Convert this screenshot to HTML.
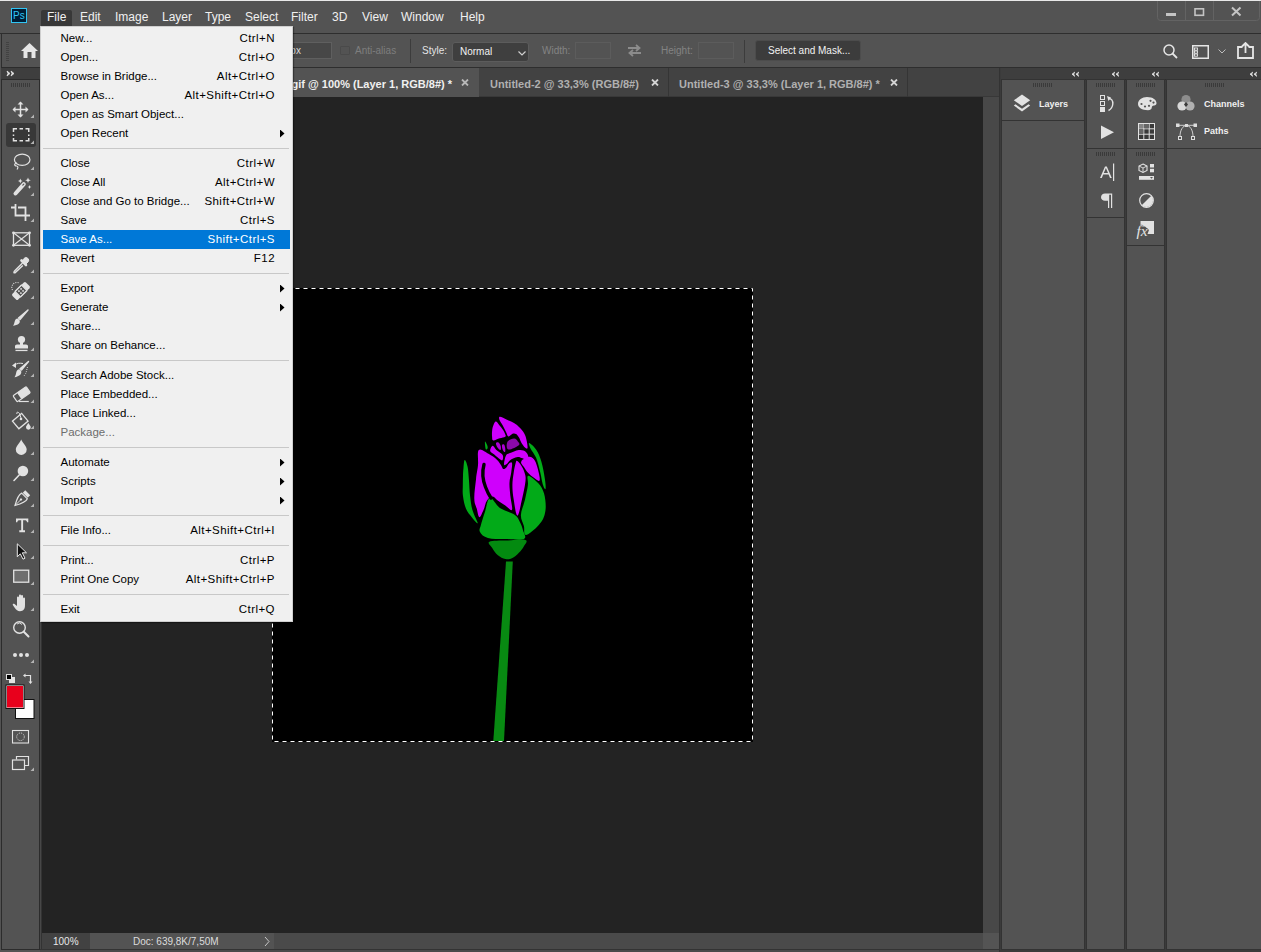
<!DOCTYPE html>
<html><head><meta charset="utf-8">
<style>
*{margin:0;padding:0;box-sizing:border-box}
html,body{width:1261px;height:952px;overflow:hidden;background:#535353;font-family:"Liberation Sans",sans-serif}
.a{position:absolute}
.t{position:absolute;white-space:nowrap;line-height:1}
/* menu bar */
#topstrip{left:0;top:0;width:1261px;height:1px;background:#e8e8e8}
#menubar{left:0;top:1px;width:1261px;height:32px;background:#535353}
.mb{position:absolute;top:10px;font-size:12px;color:#f0f0f0;white-space:nowrap;line-height:12px}
#opts{left:0;top:33px;width:1261px;height:34px;background:#535353;border-top:1px solid #2e2e2e}
#tabbar{left:42px;top:67px;width:957px;height:30px;background:#424242;border-top:1px solid #2e2e2e}
#canvas{left:42px;top:97px;width:941px;height:836px;background:#232323}
#vscroll{left:983px;top:97px;width:16px;height:836px;background:#484848}
#status{left:42px;top:933px;width:941px;height:16px;background:#4a4a4a}
#doc{left:272px;top:288px;width:481px;height:454px;background:#000}
/* menu */
#menu{left:40px;top:26px;width:253px;height:596px;background:#f0f0f0;border:1px solid #cfcfcf;box-shadow:1px 1px 1px rgba(0,0,0,.35)}
.mi{position:absolute;left:2px;width:247px;height:19px}
.mi .l{position:absolute;left:17.5px;top:3px;font-size:11.5px;color:#000;white-space:nowrap;line-height:12px}
.mi .r{position:absolute;right:15px;top:3px;font-size:11.5px;letter-spacing:0.45px;color:#000;white-space:nowrap;line-height:12px}
.mi.h{background:#0078d7}
.mi.h .l,.mi.h .r{color:#fff}
.mi.d .l{color:#6d6d6d}
.sep{position:absolute;left:2px;width:246px;height:1px;background:#c8c8c8}
.arr{position:absolute;left:237px;top:5.5px;width:4.5px;height:8px;background:#000;clip-path:polygon(0 0,100% 50%,0 100%)}
</style></head><body>
<div id="topstrip" class="a"></div>
<div id="menubar" class="a">
  <div class="a" style="left:11px;top:7px;width:16px;height:15px;background:#001e36;border:1px solid #31c5f4"></div>
  <div class="t" style="left:13px;top:10px;font-size:10px;color:#31c5f4">Ps</div>
  <div class="a" style="left:41px;top:9px;width:31px;height:16px;background:#383838;border-radius:2px 2px 0 0"></div>
  <div class="mb" style="left:47px">File</div>
  <div class="mb" style="left:80px">Edit</div>
  <div class="mb" style="left:115px">Image</div>
  <div class="mb" style="left:162px">Layer</div>
  <div class="mb" style="left:205px">Type</div>
  <div class="mb" style="left:245px">Select</div>
  <div class="mb" style="left:291px">Filter</div>
  <div class="mb" style="left:332px">3D</div>
  <div class="mb" style="left:362px">View</div>
  <div class="mb" style="left:401px">Window</div>
  <div class="mb" style="left:460px">Help</div>
</div>
<svg class="a" style="left:1150px;top:0" width="111" height="25" viewBox="1150 0 111 25">
  <path d="M1157.5 1 V17.5 Q1157.5 20.5 1160.5 20.5 H1256.5 Q1259.5 20.5 1259.5 17.5 V1" fill="none" stroke="#636363" stroke-width="1"/>
  <path d="M1185.5 1 V20 M1213.5 1 V20" stroke="#636363" stroke-width="1"/>
  <rect x="1166" y="13" width="10" height="3" fill="#c4c4c4"/>
  <rect x="1195" y="8.8" width="8.5" height="6.5" fill="none" stroke="#c4c4c4" stroke-width="1.6"/>
  <path d="M1232 7.5 L1240.5 15.5 M1240.5 7.5 L1232 15.5" stroke="#c4c4c4" stroke-width="2"/>
</svg>
<div id="opts" class="a">
  <div class="a" style="left:1px;top:0;width:1px;height:34px;background:#2e2e2e"></div>
  <div class="a" style="left:6px;top:8px;width:3px;height:19px;background:repeating-linear-gradient(#424242 0 1px,transparent 1px 2px)"></div>
  <svg class="a" style="left:21px;top:9px" width="17" height="15" viewBox="0 0 17 15"><path d="M8.5 0 L17 8 L14.5 8 L14.5 15 L10.5 15 L10.5 9 L6.5 9 L6.5 15 L2.5 15 L2.5 8 L0 8 Z" fill="#e6e6e6"/></svg>
  <div class="a" style="left:270px;top:8px;width:62px;height:17px;background:#474747;border:1px solid #5f5f5f"></div>
  <div class="t" style="left:282px;top:12px;font-size:10px;color:#d8d8d8">0 px</div>
  <div class="a" style="left:340px;top:12px;width:10px;height:9px;border:1px solid #4a4a4a;border-radius:1px"></div>
  <div class="t" style="left:355px;top:12px;font-size:10px;color:#7e7e7e">Anti-alias</div>
  <div class="a" style="left:410px;top:5px;width:1px;height:24px;background:#3c3c3c"></div>
  <div class="t" style="left:422px;top:12px;font-size:10px;color:#e4e4e4">Style:</div>
  <div class="a" style="left:452px;top:8px;width:77px;height:20px;background:#3f3f3f;border:1px solid #5c5c5c;border-radius:3px"></div>
  <div class="t" style="left:460px;top:13px;font-size:10px;color:#f2f2f2">Normal</div>
  <svg class="a" style="left:518px;top:17px" width="8" height="5" viewBox="0 0 8 5"><path d="M0.5 0.5 L4 4 L7.5 0.5" stroke="#d0d0d0" stroke-width="1.2" fill="none"/></svg>
  <div class="t" style="left:542px;top:12px;font-size:10px;color:#838383">Width:</div>
  <div class="a" style="left:575px;top:8px;width:36px;height:17px;border:1px solid #5c5c5c"></div>
  <svg class="a" style="left:627px;top:10px" width="15" height="13" viewBox="0 0 15 13"><path d="M1 4 L12 4 M9 1 L12.5 4 L9 7 M14 9 L3 9 M6 6 L2.5 9 L6 12" stroke="#8c8c8c" stroke-width="1.8" fill="none"/></svg>
  <div class="t" style="left:661px;top:12px;font-size:10px;color:#838383">Height:</div>
  <div class="a" style="left:698px;top:8px;width:36px;height:17px;border:1px solid #5c5c5c"></div>
  <div class="a" style="left:744px;top:6px;width:1px;height:23px;background:#3c3c3c"></div>
  <div class="a" style="left:755px;top:6px;width:106px;height:21px;background:#3c3c3c;border:1px solid #4c4c4c;border-radius:3px"></div>
  <div class="t" style="left:768px;top:12px;font-size:10px;color:#f2f2f2">Select and Mask...</div>
  <svg class="a" style="left:1163px;top:10px" width="15" height="15" viewBox="0 0 15 15"><circle cx="6" cy="6" r="5" stroke="#e6e6e6" stroke-width="1.5" fill="none"/><path d="M9.5 9.5 L14 14" stroke="#e6e6e6" stroke-width="1.8"/></svg>
  <svg class="a" style="left:1192px;top:11px" width="17" height="14" viewBox="0 0 17 14"><rect x="0.75" y="0.75" width="15.5" height="12.5" stroke="#e6e6e6" stroke-width="1.5" fill="none"/><rect x="2.5" y="3" width="3" height="2.2" fill="none" stroke="#e6e6e6" stroke-width="0.9"/><rect x="2.5" y="6" width="3" height="2.2" fill="none" stroke="#e6e6e6" stroke-width="0.9"/><rect x="2.5" y="9" width="3" height="2.2" fill="none" stroke="#e6e6e6" stroke-width="0.9"/></svg>
  <svg class="a" style="left:1218px;top:15px" width="8" height="5" viewBox="0 0 8 5"><path d="M0.5 0.5 L4 4 L7.5 0.5" stroke="#bdbdbd" stroke-width="1" fill="none"/></svg>
  <svg class="a" style="left:1237px;top:8px" width="17" height="17" viewBox="0 0 17 17"><path d="M5.5 5 L1 5 L1 16 L16 16 L16 5 L11.5 5" stroke="#e6e6e6" stroke-width="1.8" fill="none"/><path d="M8.5 11 L8.5 2 M5 4.5 L8.5 1 L12 4.5" stroke="#e6e6e6" stroke-width="1.8" fill="none"/></svg>
</div>
<div id="tabbar" class="a">
  <div class="a" style="left:437px;top:28px;width:520px;height:1px;background:#383838"></div>
  <div class="a" style="left:0;top:0;width:437px;height:29px;background:#535353"></div>
  <div class="t" style="left:249.5px;top:11px;font-size:11px;font-weight:700;color:#f0f0f0">gif @ 100% (Layer 1, RGB/8#) *</div>
  <svg class="a" style="left:419px;top:11px" width="8" height="7" viewBox="0 0 8 7"><path d="M1 0.5 L7 6.5 M7 0.5 L1 6.5" stroke="#b8b8b8" stroke-width="1.8"/></svg>
  <div class="t" style="left:448px;top:11px;font-size:11px;font-weight:700;color:#b0b0b0">Untitled-2 @ 33,3% (RGB/8#)</div>
  <svg class="a" style="left:609px;top:11px" width="8" height="7" viewBox="0 0 8 7"><path d="M1 0.5 L7 6.5 M7 0.5 L1 6.5" stroke="#d4d4d4" stroke-width="1.8"/></svg>
  <div class="a" style="left:626px;top:0;width:1px;height:29px;background:#353535"></div>
  <div class="t" style="left:637px;top:11px;font-size:11px;font-weight:700;color:#b0b0b0">Untitled-3 @ 33,3% (Layer 1, RGB/8#) *</div>
  <svg class="a" style="left:848px;top:11px" width="8" height="7" viewBox="0 0 8 7"><path d="M1 0.5 L7 6.5 M7 0.5 L1 6.5" stroke="#d4d4d4" stroke-width="1.8"/></svg>
  <div class="a" style="left:865px;top:0;width:1px;height:29px;background:#353535"></div>
</div>
<div id="canvas" class="a"></div>
<div id="vscroll" class="a"></div>
<div class="a" style="left:983px;top:933px;width:16px;height:16px;background:#545454"></div>
<div class="a" style="left:0;top:949px;width:1261px;height:3px;background:#4a4a4a;border-top:1px solid #333"></div>
<div id="status" class="a">
  <div class="a" style="left:0;top:0;width:48px;height:16px;background:#424242"></div>
  <div class="t" style="left:11px;top:4px;font-size:10px;color:#e8e8e8">100%</div>
  <div class="a" style="left:48px;top:0;width:184px;height:16px;background:#535353"></div>
  <div class="t" style="left:91px;top:4px;font-size:10px;color:#dcdcdc">Doc: 639,8K/7,50M</div>
  <svg class="a" style="left:222px;top:3px" width="6" height="11" viewBox="0 0 6 11"><path d="M1 1 L5 5.5 L1 10" stroke="#c8c8c8" stroke-width="1" fill="none"/></svg>
</div>
<div id="doc" class="a"></div>
<!--FLOWER--><svg class="a" style="left:450px;top:400px" width="110" height="345" viewBox="450 400 110 345">
<path d="M500.0 416.8 C501.4 416.8 504.4 418.7 507.0 419.8 C509.6 420.9 511.8 421.7 514.0 423.0 C516.2 424.3 517.2 425.2 519.0 427.0 C520.8 428.8 522.6 430.6 524.0 433.0 C525.4 435.4 525.9 437.2 526.5 440.0 C527.1 442.8 527.8 446.6 527.5 448.0 C527.2 449.4 526.1 448.4 525.0 447.5 C523.9 446.6 522.6 444.8 521.5 443.0 C520.4 441.2 520.0 439.1 519.0 437.5 C518.0 435.9 517.2 434.7 516.0 434.0 C514.8 433.3 513.9 433.3 512.5 433.8 C511.1 434.3 509.7 436.8 508.5 436.5 C507.3 436.2 507.1 434.1 506.0 432.0 C504.9 429.9 503.7 427.2 502.5 425.0 C501.3 422.8 500.0 421.5 499.5 420.0 C499.0 418.5 498.6 416.8 500.0 416.8Z" fill="#cf00fc"/>
<path d="M496.0 421.5 C497.2 421.7 498.7 424.4 500.0 426.0 C501.3 427.6 502.1 428.4 503.1 430.0 C504.1 431.6 505.0 433.6 505.4 434.8 C505.8 436.0 506.2 436.1 505.2 436.7 C504.2 437.3 501.9 437.6 499.7 438.3 C497.5 439.0 494.7 440.6 493.3 440.4 C491.9 440.2 492.3 438.9 492.1 437.0 C491.9 435.1 491.9 432.2 492.2 430.0 C492.5 427.8 492.8 426.6 493.5 425.0 C494.2 423.4 494.8 421.3 496.0 421.5Z" fill="#cf00fc"/>
<path d="M507.4 441.9 C508.4 439.9 512.1 438.7 514.0 438.6 C515.9 438.5 516.9 440.2 517.8 441.4 C518.7 442.6 520.5 443.7 518.8 445.2 C517.1 446.7 510.4 450.1 508.3 449.5 C506.2 448.9 506.4 443.9 507.4 441.9Z" fill="#8a0aa8"/>
<path d="M496.0 443.2 C496.2 442.3 497.6 442.0 498.5 442.5 C499.4 443.0 500.3 444.6 500.7 446.0 C501.1 447.4 501.1 449.7 500.5 450.0 C499.9 450.3 498.3 448.7 497.5 447.5 C496.7 446.3 495.8 444.1 496.0 443.2Z" fill="#b000d8"/>
<path d="M502.0 445.0 C502.2 444.0 503.4 443.9 504.0 444.5 C504.6 445.1 505.0 446.6 505.2 448.0 C505.4 449.4 505.4 451.6 505.0 452.0 C504.6 452.4 503.4 451.3 502.8 450.0 C502.2 448.7 501.8 446.0 502.0 445.0Z" fill="#b000d8"/>
<path d="M490.2 450.9 C489.9 449.3 491.5 445.9 492.6 445.7 C493.7 445.5 494.8 448.5 496.4 450.0 C498.0 451.5 500.4 452.6 501.6 453.8 C502.8 455.0 503.0 455.4 503.1 456.6 C503.2 457.8 503.1 460.2 502.1 460.4 C501.1 460.6 499.3 458.7 497.8 457.6 C496.3 456.5 495.4 455.5 494.0 454.3 C492.6 453.1 490.5 452.5 490.2 450.9Z" fill="#cf00fc"/>
<path d="M505.9 455.7 C506.9 453.7 507.8 454.1 509.3 453.3 C510.8 452.5 512.3 452.0 514.0 451.4 C515.7 450.8 517.1 450.2 518.8 450.0 C520.5 449.8 521.9 449.8 523.5 450.5 C525.1 451.2 526.4 452.3 527.3 453.8 C528.2 455.3 528.6 457.5 528.3 458.5 C528.0 459.5 526.6 459.6 525.4 459.5 C524.2 459.4 523.0 458.5 521.6 458.1 C520.2 457.7 519.4 457.0 517.8 457.1 C516.2 457.2 514.7 457.8 513.1 458.5 C511.5 459.2 510.5 459.8 509.3 460.9 C508.1 462.0 507.4 463.7 506.4 464.3 C505.4 464.9 504.1 465.9 504.0 464.3 C503.9 462.7 504.9 457.7 505.9 455.7Z" fill="#cf00fc"/>
<path d="M478.8 450.0 C480.7 448.0 485.2 452.1 488.5 453.8 C491.8 455.6 494.6 457.6 496.9 459.7 C499.2 461.8 499.9 463.5 501.1 465.2 C502.2 466.9 502.3 468.5 503.2 468.9 C504.1 469.4 505.1 468.6 506.1 467.7 C507.1 466.8 507.6 464.8 508.7 463.9 C509.7 463.1 511.6 461.4 512.0 463.1 C512.5 464.7 511.6 469.1 511.2 472.7 C510.7 476.4 509.6 478.7 509.5 482.8 C509.3 487.0 509.9 490.5 510.3 495.4 C510.8 500.4 512.9 507.9 512.0 509.7 C511.1 511.6 507.9 507.2 505.3 505.5 C502.7 503.8 500.0 502.1 497.7 500.5 C495.4 498.8 494.7 496.4 492.7 496.4 C490.7 496.4 488.7 497.9 487.0 500.4 C485.3 502.9 484.9 506.9 483.5 510.0 C482.1 513.0 480.6 517.4 479.4 517.2 C478.2 517.0 477.7 512.2 476.8 508.8 C475.9 505.4 474.4 504.1 474.3 498.7 C474.1 493.3 475.3 485.5 476.0 479.4 C476.6 473.2 477.5 470.4 478.0 465.0 C478.5 459.6 476.9 452.1 478.8 450.0Z" fill="#cf00fc"/>
<path d="M517.1 461.0 C517.9 461.3 519.0 462.2 520.4 464.3 C521.8 466.5 523.7 469.6 524.6 472.7 C525.5 475.8 525.9 476.4 525.5 481.1 C525.0 485.9 523.6 492.5 522.1 498.8 C520.6 505.1 519.0 515.4 517.5 515.6 C515.9 515.7 514.6 505.2 513.7 499.6 C512.8 494.1 512.4 490.3 512.4 485.3 C512.4 480.4 513.1 476.9 513.7 472.7 C514.3 468.6 515.2 464.8 515.8 462.6 C516.4 460.5 516.2 460.7 517.1 461.0Z" fill="#cf00fc"/>
<path d="M521.3 461.4 C522.2 459.5 526.5 457.1 528.8 456.8 C531.1 456.4 532.3 457.4 533.9 459.3 C535.4 461.1 536.1 463.0 537.2 466.8 C538.3 470.7 540.4 478.3 539.7 480.3 C539.1 482.3 536.0 479.2 533.9 477.8 C531.7 476.4 529.8 474.7 528.0 472.7 C526.1 470.7 525.0 468.9 523.8 466.8 C522.5 464.8 520.3 463.2 521.3 461.4Z" fill="#cf00fc"/>
<path d="M464.7 460.0 C463.9 460.2 463.8 465.2 463.5 468.0 C463.2 470.8 463.1 471.9 463.0 475.2 C462.9 478.5 462.8 482.1 462.8 486.0 C462.8 489.9 462.4 492.0 463.0 496.2 C463.6 500.4 464.4 504.9 466.0 508.8 C467.6 512.6 469.7 514.6 471.8 517.2 C473.9 519.8 477.6 524.3 477.7 523.1 C477.8 521.9 474.0 515.4 472.6 510.5 C471.2 505.6 470.8 501.9 470.1 496.2 C469.4 490.5 469.4 484.8 468.9 479.4 C468.4 474.0 468.4 470.4 467.6 466.8 C466.8 463.2 465.5 459.8 464.7 460.0Z" fill="#02aa18"/>
<path d="M485.0 441.6 C485.3 440.9 486.7 444.1 487.2 445.3 C487.7 446.5 487.8 447.6 487.6 448.2 C487.3 448.9 486.2 450.2 485.7 449.0 C485.3 447.8 484.7 442.3 485.0 441.6Z" fill="#02aa18"/>
<path d="M529.2 443.0 C530.3 443.3 534.2 446.6 536.4 450.0 C538.6 453.5 539.9 456.6 541.4 461.8 C543.0 467.0 544.0 473.7 544.8 478.6 C545.6 483.5 545.9 487.5 545.6 488.7 C545.3 489.9 544.2 488.7 543.1 485.3 C542.0 481.9 541.1 475.3 539.7 470.2 C538.4 465.1 537.7 461.6 536.0 457.6 C534.3 453.6 531.7 451.0 530.5 448.4 C529.3 445.7 528.2 442.7 529.2 443.0Z" fill="#02aa18"/>
<path d="M527.9 476.0 C529.1 475.1 532.3 477.8 534.8 480.0 C537.4 482.2 539.9 484.3 541.8 488.0 C543.7 491.6 544.8 495.2 545.3 499.9 C545.9 504.7 546.0 509.3 544.8 513.9 C543.6 518.5 542.3 521.0 538.8 524.9 C535.4 528.7 528.6 534.7 525.9 534.9 C523.1 535.1 524.8 529.5 523.9 525.9 C522.9 522.2 520.7 519.7 520.9 514.9 C521.1 510.2 523.6 505.4 524.9 499.9 C526.1 494.5 527.3 489.4 527.9 485.0 C528.4 480.6 526.6 476.9 527.9 476.0Z" fill="#02aa18"/>
<path d="M489.9 497.9 C492.7 497.2 495.3 504.8 499.9 507.9 C504.5 511.0 511.2 512.3 514.9 514.9 C518.5 517.5 518.4 519.2 519.9 521.9 C521.3 524.6 522.1 526.8 522.9 529.9 C523.6 533.0 527.2 537.2 523.9 538.9 C520.6 540.5 511.5 539.0 504.9 538.9 C498.3 538.7 492.5 539.1 487.9 537.9 C483.4 536.6 481.2 534.3 480.0 531.9 C478.7 529.5 480.0 528.5 480.9 524.9 C481.9 521.2 483.3 516.9 484.9 511.9 C486.6 507.0 487.2 498.7 489.9 497.9Z" fill="#02aa18"/>
<path d="M489.4 541.7 C492.1 540.2 500.3 540.8 506.9 540.5 C513.5 540.1 522.2 538.8 525.4 539.9 C528.5 540.9 525.1 544.0 523.9 546.3 C522.7 548.7 521.1 550.6 518.9 552.8 C516.7 555.0 514.4 557.2 511.9 558.3 C509.4 559.5 508.0 559.6 505.4 559.0 C502.8 558.5 500.3 557.3 497.9 555.3 C495.5 553.4 494.0 550.8 492.4 548.3 C490.9 545.8 486.8 543.1 489.4 541.7Z" fill="#038a10"/>
<path d="M484 464.5 C482.5 470 482 478 485.5 487 C487 491 489 495 491 498" fill="none" stroke="#000" stroke-width="3.4" stroke-linecap="round"/>
<path d="M506 561.5 L512.8 561.5 L504 741 L493.3 741Z" fill="#088a12"/>
</svg><!--/FLOWER-->
<svg class="a" style="left:272px;top:288px" width="481" height="454" viewBox="272 288 481 454"><rect x="272.5" y="288.5" width="480" height="453" fill="none" stroke="#fff" stroke-width="1" stroke-dasharray="4 4" stroke-dashoffset="1"/></svg>

<div class="a" style="left:40px;top:67px;width:2px;height:882px;background:#474747;border-right:1px solid #333"></div>
<div id="toolbar" class="a" style="left:0;top:67px;width:40px;height:885px;background:#535353">
  <div class="a" style="left:1px;top:0;width:39px;height:883px;border:1px solid #2c2c2c;border-top:none"></div>
  <div class="a" style="left:1px;top:0;width:39px;height:13px;background:#3e3e3e;border-top:1px solid #2c2c2c;border-bottom:1px solid #2c2c2c"></div>
</div>
<svg class="a" style="left:0;top:0" width="42" height="952" viewBox="0 0 42 952">
 <g fill="#e2e2e2">
  <!-- >> -->
  <path d="M7 71 L10 73.5 L7 76 L8 73.5Z M11 71 L14 73.5 L11 76 L12 73.5Z" stroke="#e2e2e2" stroke-width="0.8"/>
 </g>
 <!-- grip -->
 <g fill="#3a3a3a">
  <rect x="11" y="83" width="1" height="4"/><rect x="13" y="83" width="1" height="4"/><rect x="15" y="83" width="1" height="4"/><rect x="17" y="83" width="1" height="4"/><rect x="19" y="83" width="1" height="4"/><rect x="21" y="83" width="1" height="4"/><rect x="23" y="83" width="1" height="4"/><rect x="25" y="83" width="1" height="4"/><rect x="27" y="83" width="1" height="4"/><rect x="29" y="83" width="1" height="4"/>
 </g>
 <!-- selected bg -->
 <rect x="6" y="123" width="30" height="24" rx="3" fill="#383838"/>
 <!-- triangles -->
 <g fill="#b4b4b4">
  <path d="M30.5 118 L34 118 L34 114.5Z"/>
  <path d="M30.5 144 L34 144 L34 140.5Z"/>
  <path d="M30.5 170 L34 170 L34 166.5Z"/>
  <path d="M30.5 196 L34 196 L34 192.5Z"/>
  <path d="M30.5 222 L34 222 L34 218.5Z"/>
  <path d="M30.5 273 L34 273 L34 269.5Z"/>
  <path d="M30.5 299 L34 299 L34 295.5Z"/>
  <path d="M30.5 325 L34 325 L34 321.5Z"/>
  <path d="M30.5 351 L34 351 L34 347.5Z"/>
  <path d="M30.5 377 L34 377 L34 373.5Z"/>
  <path d="M30.5 403 L34 403 L34 399.5Z"/>
  <path d="M30.5 429 L34 429 L34 425.5Z"/>
  <path d="M30.5 455 L34 455 L34 451.5Z"/>
  <path d="M30.5 481 L34 481 L34 477.5Z"/>
  <path d="M30.5 507 L34 507 L34 503.5Z"/>
  <path d="M30.5 533 L34 533 L34 529.5Z"/>
  <path d="M30.5 559 L34 559 L34 555.5Z"/>
  <path d="M30.5 585 L34 585 L34 581.5Z"/>
  <path d="M30.5 611 L34 611 L34 607.5Z"/>
  <path d="M30.5 663 L34 663 L34 659.5Z"/>
  <path d="M30.5 771 L34 771 L34 767.5Z"/>
 </g>
 <g stroke="#e2e2e2" fill="none" stroke-width="1.5">
  <!-- move -->
  <path d="M13.5 109.5 H27.5 M20.5 102.5 V116.5"/>
  <!-- marquee -->
  <path d="M13.5 132 V128.75 H17 M19.5 128.75 H23 M25.5 128.75 H28.75 V132 M28.75 134.5 V136 M28.75 138 V140.75 H25.5 M23 140.75 H19.5 M17 140.75 H13.5 V138 M13.5 136 V134.5"/>
  <!-- lasso -->
  <ellipse cx="22.2" cy="159.8" rx="7.8" ry="5.6" stroke-width="1.2"/>
  <path d="M17 163 C14 163 14 166 16.5 166 C18.5 166 18 168 17 169.5" stroke-width="1.2"/>
  <!-- crop -->
  <path d="M11 207.5 H15.5 M15.5 204 V215.5 H25.5 M18 207.5 H25.5 V221 M25.5 215.5 H30" stroke-width="1.8"/>
  <!-- frame -->
  <rect x="13.5" y="232.8" width="16" height="12.5" stroke-width="1.3"/>
  <path d="M13.5 232.8 L29.5 245.3 M29.5 232.8 L13.5 245.3" stroke-width="1.1"/>
 </g>
 <g fill="#e2e2e2">
  <path d="M20.5 101.5 L23.5 104.5 L17.5 104.5Z M20.5 117.5 L23.5 114.5 L17.5 114.5Z M12.5 109.5 L15.5 106.5 L15.5 112.5Z M28.5 109.5 L25.5 106.5 L25.5 112.5Z"/>
  <!-- frame corners -->
  <circle cx="13.5" cy="232.8" r="1.4"/><circle cx="29.5" cy="232.8" r="1.4"/><circle cx="13.5" cy="245.3" r="1.4"/><circle cx="29.5" cy="245.3" r="1.4"/>
  <!-- wand sparkles -->
  <path d="M20.3 178.5 L21 180.3 L22.6 181 L21 181.7 L20.3 183.4 L19.6 181.7 L18 181 L19.6 180.3Z"/>
  <path d="M28 177.5 L28.8 179.6 L30.8 180.3 L28.8 181 L28 183 L27.2 181 L25.2 180.3 L27.2 179.6Z"/>
  <path d="M29.5 185 L30.1 186.4 L31.4 187 L30.1 187.6 L29.5 189 L28.9 187.6 L27.6 187 L28.9 186.4Z"/>
 </g>
 <!-- wand stick -->
 <path d="M15.5 193.5 L23.8 184.2" stroke="#e2e2e2" stroke-width="4" stroke-linecap="round"/>
 <path d="M22.8 185.2 L23.8 184.2" stroke="#535353" stroke-width="1.2" stroke-linecap="round"/>
 <!-- eyedropper -->
 <g fill="#e2e2e2" stroke="#e2e2e2">
  <path d="M24 258.5 a2.6 2.6 0 0 1 4 3.5 l-2 2 -3.5-3.5z" stroke-width="1"/>
  <path d="M21.5 260.5 L26 265" stroke-width="2.6" stroke-linecap="round"/>
 </g>
 <path d="M22.5 263 L15 270.5 C13.5 272 13.7 273.3 15 272.8 L22.8 265.5" stroke="#e2e2e2" stroke-width="1.4" fill="none"/>
 <!-- healing -->
 <g transform="rotate(-45 21 291)">
  <rect x="11.5" y="287" width="19" height="8" rx="1.5" fill="#e2e2e2"/>
  <rect x="16.5" y="287.8" width="9" height="6.4" fill="#535353"/>
  <rect x="16.5" y="287" width="9" height="8" fill="none" stroke="#e2e2e2" stroke-width="1"/>
  <circle cx="19.5" cy="289.6" r="0.9" fill="#e2e2e2"/><circle cx="22.5" cy="289.6" r="0.9" fill="#e2e2e2"/><circle cx="19.5" cy="292.4" r="0.9" fill="#e2e2e2"/><circle cx="22.5" cy="292.4" r="0.9" fill="#e2e2e2"/>
 </g>
 <path d="M12.5 290 A5 5 0 0 1 19 283" stroke="#e2e2e2" stroke-width="1.1" stroke-dasharray="1 1.2" fill="none"/>
 <!-- brush -->
 <path d="M28 310 L20 319.5 L18.5 318 Z" fill="#e2e2e2" stroke="#e2e2e2" stroke-width="1.4" stroke-linejoin="round"/>
 <path d="M17.5 318.5 C20 319.5 20.5 322 19 323.5 C17.5 325 15 325.5 13 325.7 C14.5 324 14.2 322.5 15 320.5 C15.5 319.3 16.5 318.4 17.5 318.5Z" fill="#e2e2e2"/>
 <!-- stamp -->
 <g fill="#e2e2e2">
  <circle cx="21.5" cy="339.5" r="3.6"/>
  <rect x="20" y="341" width="3" height="4"/>
  <path d="M15 346 Q15 344.5 17 344.5 H26 Q28 344.5 28 346 V348.5 H15Z"/>
  <rect x="15.5" y="349.8" width="12" height="1.3"/>
 </g>
 <!-- history brush -->
 <path d="M28.5 361.5 L21.5 370 L20 368.7Z" fill="#e2e2e2" stroke="#e2e2e2" stroke-width="1.4" stroke-linejoin="round"/>
 <path d="M19.3 369.2 C21.5 370.2 22 372.5 20.5 374.5 C19 376 16.5 377 14.5 377.2 C16 375.5 15.8 373.5 16.5 371.5 C17 370 18 369 19.3 369.2Z" fill="#e2e2e2"/>
 <path d="M12 365.5 L16 362.5 L16 368Z" fill="#e2e2e2"/>
 <path d="M15 365 C17 363 20 363 23 363.5" stroke="#e2e2e2" stroke-width="1" fill="none"/>
 <path d="M27.5 367 L26 373 L24 376" stroke="#e2e2e2" stroke-width="1" stroke-dasharray="0.9 1.3" fill="none"/>
 <!-- eraser -->
 <g transform="rotate(-35 21 395)">
  <rect x="14" y="391" width="16" height="7.5" rx="1" fill="none" stroke="#e2e2e2" stroke-width="1.2"/>
  <rect x="19" y="391" width="11" height="7.5" rx="1" fill="#e2e2e2"/>
 </g>
 <path d="M19 401.5 H28.8" stroke="#e2e2e2" stroke-width="1.2"/>
 <!-- bucket -->
 <g transform="rotate(-40 20 420)">
  <rect x="13.5" y="416" width="12" height="10" fill="none" stroke="#e2e2e2" stroke-width="1.3"/>
 </g>
 <path d="M17 414 C16 412 18 411.5 19.5 413.5 L21 418" stroke="#e2e2e2" stroke-width="1" fill="none"/>
 <circle cx="21" cy="419" r="1.3" fill="#e2e2e2"/>
 <path d="M28.3 423 C29.5 425 30.8 426 30.8 427.3 A2.3 2.3 0 0 1 26 427.3 C26 426 27.2 425 28.3 423Z" fill="#e2e2e2"/>
 <!-- blur drop -->
 <path d="M21.2 439.5 C22.5 442.5 26.7 446.5 26.7 449.5 A5.4 5.4 0 0 1 15.8 449.5 C15.8 446.5 20 442.5 21.2 439.5Z" fill="#e2e2e2"/>
 <!-- dodge -->
 <circle cx="22.9" cy="471" r="5.3" fill="#e2e2e2"/>
 <path d="M19.2 475 L14 480.5" stroke="#e2e2e2" stroke-width="1.6" stroke-linecap="round"/>
 <!-- pen -->
 <g transform="rotate(45 21 499.5)">
  <rect x="17.5" y="490" width="7" height="3.5" fill="#e2e2e2"/>
  <path d="M17 494.5 H25 C26 497 25 501 21 508 C17 501 16 497 17 494.5Z" fill="none" stroke="#e2e2e2" stroke-width="1.2"/>
  <path d="M21 499.5 V508" stroke="#e2e2e2" stroke-width="0.9"/>
  <circle cx="21" cy="499.5" r="1.2" fill="#e2e2e2"/>
 </g>
 <!-- type T -->
 <path d="M16 518.5 H28.3 V522.3 H27 C26.8 520.7 26.2 520.2 24.6 520.2 H23.1 V530.3 H25 V532.2 H19.3 V530.3 H21.2 V520.2 H19.7 C18.1 520.2 17.5 520.7 17.3 522.3 H16Z" fill="#e2e2e2"/>
 <!-- path selection -->
 <path d="M17.3 543.8 L26.5 552.8 L22.3 552.8 L25 558.2 L23 559.2 L20.3 553.8 L17.3 556.8Z" fill="#111" stroke="#e8e8e8" stroke-width="1" stroke-linejoin="round"/>
 <!-- rectangle -->
 <rect x="13.7" y="570.2" width="15" height="12" fill="#6e6e6e" stroke="#e2e2e2" stroke-width="1.3"/>
 <!-- hand -->
 <path d="M17 604 V597.5 a1 1 0 0 1 2 0 V603 V595.5 a1 1 0 0 1 2 0 V603 V596 a1 1 0 0 1 2 0 V603 V598.5 a1 1 0 0 1 2 0 V605 C25 609 23.5 611.2 20 611.2 C17.5 611.2 16.5 610 14.5 607.5 L12.8 605 C12.5 604 13.5 603.3 14.5 604 L17 606Z" fill="#e2e2e2"/>
 <!-- zoom -->
 <circle cx="19.5" cy="627.5" r="5.8" fill="none" stroke="#e2e2e2" stroke-width="1.4"/>
 <path d="M23.8 631.8 L28.5 636.5" stroke="#e2e2e2" stroke-width="2" stroke-linecap="round"/>
 <path d="M17 624 A3.5 3.5 0 0 1 22 624.5" stroke="#e2e2e2" stroke-width="0.9" fill="none"/>
 <!-- dots -->
 <g fill="#e2e2e2"><circle cx="15" cy="655" r="2"/><circle cx="21" cy="655" r="2"/><circle cx="27" cy="655" r="2"/></g>
 <!-- default colors -->
 <rect x="9.5" y="677.5" width="5" height="5" fill="#e2e2e2" stroke="#e2e2e2"/>
 <rect x="6.5" y="674.5" width="5" height="5" fill="#000" stroke="#e2e2e2"/>
 <!-- swap -->
 <path d="M25 675.5 H30.5 V682" stroke="#e2e2e2" stroke-width="1.2" fill="none"/>
 <path d="M23 675.5 L25.5 673.5 L25.5 677.5Z M30.5 684 L28.5 681.5 L32.5 681.5Z" fill="#e2e2e2"/>
 <!-- bg color -->
 <rect x="15.5" y="699.5" width="18.5" height="19" fill="#fff" stroke="#111" stroke-width="1"/>
 <!-- fg color -->
 <rect x="5.5" y="684.5" width="19" height="24.5" fill="#111"/>
 <rect x="6.5" y="685.5" width="17" height="22.5" fill="#fff"/>
 <rect x="7" y="686" width="16" height="21.5" fill="#e8001c"/>
 <!-- quick mask -->
 <rect x="12.5" y="730.5" width="16" height="12.5" fill="none" stroke="#e2e2e2" stroke-width="1.1"/>
 <circle cx="20.5" cy="736.8" r="3.8" fill="none" stroke="#e2e2e2" stroke-width="0.9" stroke-dasharray="1 1"/>
 <!-- screen mode -->
 <path d="M16.5 759.5 V756.5 H28.5 V765.5 H25" stroke="#e2e2e2" stroke-width="1.2" fill="none"/>
 <rect x="12.5" y="760" width="12" height="9.5" fill="none" stroke="#e2e2e2" stroke-width="1.2"/>
</svg>

<div id="dock" class="a" style="left:999px;top:67px;width:262px;height:885px;background:#3b3b3b">
  <div class="a" style="left:2px;top:0;width:260px;height:13px;background:#3e3e3e;border-top:1px solid #2e2e2e;border-bottom:1px solid #2e2e2e"></div>
  <div class="a" style="left:0;top:0;width:1px;height:885px;background:#333"></div>
  <div class="a" style="left:0;top:0;width:2px;height:1px;background:#2e2e2e"></div>
</div>
<svg class="a" style="left:999px;top:67px" width="262" height="885" viewBox="999 67 262 885">
 <!-- columns -->
 <g fill="#535353" stroke="#333" stroke-width="1">
  <rect x="1001.5" y="79.5" width="83" height="870"/>
  <rect x="1086.5" y="79.5" width="38" height="870"/>
  <rect x="1126.5" y="79.5" width="38" height="870"/>
  <rect x="1166.5" y="79.5" width="96" height="870"/>
 </g>
 <g fill="#333">
  <rect x="1002" y="120" width="82" height="1"/>
  <rect x="1087" y="148" width="37" height="1"/>
  <rect x="1087" y="217" width="37" height="1"/>
  <rect x="1127" y="148" width="37" height="1"/>
  <rect x="1127" y="245" width="37" height="1"/>
  <rect x="1167" y="148" width="94" height="1"/>
 </g>
 <!-- << -->
 <g fill="#dcdcdc">
  <path d="M1075 72 L1072 74.2 L1075 76.4 L1074.2 74.2Z M1079 72 L1076 74.2 L1079 76.4 L1078.2 74.2Z"/>
  <path d="M1115 72 L1112 74.2 L1115 76.4 L1114.2 74.2Z M1119 72 L1116 74.2 L1119 76.4 L1118.2 74.2Z"/>
  <path d="M1155 72 L1152 74.2 L1155 76.4 L1154.2 74.2Z M1159 72 L1156 74.2 L1159 76.4 L1158.2 74.2Z"/>
  <path d="M1253 72 L1250 74.2 L1253 76.4 L1252.2 74.2Z M1257 72 L1254 74.2 L1257 76.4 L1256.2 74.2Z"/>
 </g>
 <g stroke="#dcdcdc" stroke-width="0.9" fill="none">
  <path d="M1075 72 L1072 74.2 L1075 76.4 M1079 72 L1076 74.2 L1079 76.4"/>
  <path d="M1115 72 L1112 74.2 L1115 76.4 M1119 72 L1116 74.2 L1119 76.4"/>
  <path d="M1155 72 L1152 74.2 L1155 76.4 M1159 72 L1156 74.2 L1159 76.4"/>
  <path d="M1253 72 L1250 74.2 L1253 76.4 M1257 72 L1254 74.2 L1257 76.4"/>
 </g>
 <!-- grips -->
 <g stroke="#3a3a3a" stroke-width="1">
  <path d="M1033.5 83 v4 m2 -4 v4 m2 -4 v4 m2 -4 v4 m2 -4 v4 m2 -4 v4 m2 -4 v4 m2 -4 v4 m2 -4 v4 m2 -4 v4"/>
  <path d="M1096.5 83 v4 m2 -4 v4 m2 -4 v4 m2 -4 v4 m2 -4 v4 m2 -4 v4 m2 -4 v4 m2 -4 v4 m2 -4 v4 m2 -4 v4"/>
  <path d="M1136.5 83 v4 m2 -4 v4 m2 -4 v4 m2 -4 v4 m2 -4 v4 m2 -4 v4 m2 -4 v4 m2 -4 v4 m2 -4 v4 m2 -4 v4"/>
  <path d="M1205.5 83 v4 m2 -4 v4 m2 -4 v4 m2 -4 v4 m2 -4 v4 m2 -4 v4 m2 -4 v4 m2 -4 v4 m2 -4 v4 m2 -4 v4"/>
  <path d="M1096.5 152 v4 m2 -4 v4 m2 -4 v4 m2 -4 v4 m2 -4 v4 m2 -4 v4 m2 -4 v4 m2 -4 v4 m2 -4 v4 m2 -4 v4"/>
  <path d="M1136.5 152 v4 m2 -4 v4 m2 -4 v4 m2 -4 v4 m2 -4 v4 m2 -4 v4 m2 -4 v4 m2 -4 v4 m2 -4 v4 m2 -4 v4"/>
 </g>
 <!-- layers icon -->
 <g fill="#e2e2e2">
  <path d="M1022 94.6 L1030.2 100.3 L1022 106 L1013.8 100.3Z"/>
  <path d="M1015.5 104.3 L1022 108.8 L1028.5 104.3 L1030.2 105.6 L1022 111.4 L1013.8 105.6Z"/>
 </g>
 <!-- history icon -->
 <g fill="none" stroke="#e2e2e2" stroke-width="1">
  <rect x="1100.5" y="95.5" width="4" height="4"/>
  <rect x="1100.5" y="101.5" width="4" height="4"/>
 </g>
 <rect x="1100" y="107" width="5" height="5" fill="#e2e2e2"/>
 <path d="M1108 98.5 C1111.5 98 1113 101 1112.8 104 C1112.5 107 1110.5 109.5 1108.5 110.5" stroke="#e2e2e2" stroke-width="1.4" fill="none"/>
 <path d="M1107 96 L1111 97.5 L1108.5 101Z" fill="#e2e2e2"/>
 <!-- play -->
 <path d="M1101 125.5 L1114 132.2 L1101 139Z" fill="#e2e2e2"/>
 <!-- palette -->
 <path d="M1147 97 C1153 97 1156.5 100 1156.5 103 C1156.5 106 1154 105 1152.5 106 C1151 107 1153 110 1148 110.2 C1142 110.2 1138 107.5 1138 104 C1138 100 1142 97 1147 97Z" fill="#e2e2e2"/>
 <g fill="#535353"><circle cx="1141.5" cy="104" r="1.1"/><circle cx="1145" cy="106.5" r="1.1"/><circle cx="1149" cy="105.8" r="1.1"/><circle cx="1150.5" cy="100.8" r="1.1"/><circle cx="1153.5" cy="102.6" r="1.1"/></g>
 <!-- swatches grid -->
 <rect x="1138.5" y="123.5" width="16" height="16" fill="#3a3a3a" stroke="#e2e2e2" stroke-width="1"/>
 <path d="M1143.8 123.5 V139.5 M1149.2 123.5 V139.5 M1138.5 128.8 H1154.5 M1138.5 134.2 H1154.5" stroke="#e2e2e2" stroke-width="1"/>
 <rect x="1139" y="124" width="4.3" height="4.3" fill="#858585"/>
 <rect x="1144.3" y="124" width="4.4" height="4.3" fill="#666"/>
 <rect x="1139" y="129.3" width="4.3" height="4.4" fill="#666"/>
 <!-- channels -->
 <g fill="#c8c8c8">
  <circle cx="1186" cy="99.5" r="4.6" fill="#8d8d8d"/>
  <circle cx="1182" cy="106" r="4.6" fill="#d8d8d8"/>
  <circle cx="1190" cy="106" r="4.6" fill="#b0b0b0"/>
  <path d="M1186 102 L1188 104.5 L1186 107 L1184 104.5Z" fill="#3a3a3a"/>
 </g>
 <!-- paths -->
 <path d="M1180 136.5 C1180 130 1183 125.5 1186.5 125.5 C1190 125.5 1193 130 1193 136.5 M1178 125.3 H1195" stroke="#dcdcdc" stroke-width="0.9" fill="none"/>
 <g fill="#dcdcdc">
  <rect x="1176" y="123.5" width="3.5" height="3.5"/><rect x="1185" y="124" width="3" height="3"/><rect x="1193.5" y="123.5" width="3.5" height="3.5"/>
 </g>
 <g fill="none" stroke="#dcdcdc" stroke-width="1"><rect x="1178.5" y="136.5" width="3" height="3"/><rect x="1191.5" y="136.5" width="3" height="3"/></g>
 <!-- A| -->
 <path d="M1100 178 L1105 166.5 L1106.8 166.5 L1111.8 178 L1110 178 L1108.6 174.6 L1103.2 174.6 L1101.8 178Z M1103.8 173 L1108 173 L1105.9 168Z" fill="#e2e2e2"/>
 <rect x="1113" y="163.5" width="1.2" height="17.5" fill="#e2e2e2"/>
 <!-- pilcrow -->
 <path d="M1105 193.5 H1112.2 V208 H1111 V194.7 H1109.2 V208 H1108 V200.8 H1105 C1102.8 200.8 1101 199.2 1101 197.2 C1101 195.2 1102.8 193.5 1105 193.5Z" fill="#e2e2e2"/>
 <!-- libraries -->
 <path d="M1143 164 L1147 166 V170.5 L1143 172.5 L1139 170.5 V166Z" fill="none" stroke="#e2e2e2" stroke-width="1.1"/>
 <path d="M1139 166 L1143 168 L1147 166 M1143 168 V172.5" stroke="#e2e2e2" stroke-width="0.9" fill="none"/>
 <rect x="1150" y="164" width="4" height="3.5" fill="#e2e2e2"/>
 <rect x="1150" y="168.8" width="4" height="3.5" fill="#e2e2e2"/>
 <rect x="1139" y="176" width="15" height="3.8" fill="#e2e2e2"/>
 <path d="M1150 177 L1153 177 L1151.5 178.8Z" fill="#535353"/>
 <!-- adjustments -->
 <circle cx="1146.5" cy="200.5" r="6.8" fill="none" stroke="#e2e2e2" stroke-width="1.2"/>
 <path d="M1151.3 195.7 A6.8 6.8 0 0 1 1141.7 205.3Z" fill="#e2e2e2"/>
 <!-- fx -->
 <path d="M1140.5 221 H1154 V234 H1147.5 L1149 230 L1145 226.5 L1140.5 226.5Z" fill="#e2e2e2"/>
 <text x="1136.5" y="236" font-family="Liberation Serif" font-style="italic" font-size="15.5" fill="#e2e2e2" stroke="#535353" stroke-width="0.8" paint-order="stroke">fx</text>
</svg>
<div class="t" style="left:1039px;top:100px;font-size:9px;font-weight:700;color:#f0f0f0">Layers</div>
<div class="t" style="left:1204px;top:100px;font-size:9px;font-weight:700;color:#f0f0f0">Channels</div>
<div class="t" style="left:1204px;top:127px;font-size:9px;font-weight:700;color:#f0f0f0">Paths</div>

<div id="menu" class="a">
<div class="mi" style="top:2px"><span class="l">New...</span><span class="r">Ctrl+N</span></div>
<div class="mi" style="top:21px"><span class="l">Open...</span><span class="r">Ctrl+O</span></div>
<div class="mi" style="top:40px"><span class="l">Browse in Bridge...</span><span class="r">Alt+Ctrl+O</span></div>
<div class="mi" style="top:59px"><span class="l">Open As...</span><span class="r">Alt+Shift+Ctrl+O</span></div>
<div class="mi" style="top:78px"><span class="l">Open as Smart Object...</span></div>
<div class="mi" style="top:97px"><span class="l">Open Recent</span><span class="arr"></span></div>
<div class="sep" style="top:121px"></div>
<div class="mi" style="top:127px"><span class="l">Close</span><span class="r">Ctrl+W</span></div>
<div class="mi" style="top:146px"><span class="l">Close All</span><span class="r">Alt+Ctrl+W</span></div>
<div class="mi" style="top:165px"><span class="l">Close and Go to Bridge...</span><span class="r">Shift+Ctrl+W</span></div>
<div class="mi" style="top:184px"><span class="l">Save</span><span class="r">Ctrl+S</span></div>
<div class="mi h" style="top:203px"><span class="l">Save As...</span><span class="r">Shift+Ctrl+S</span></div>
<div class="mi" style="top:222px"><span class="l">Revert</span><span class="r">F12</span></div>
<div class="sep" style="top:246px"></div>
<div class="mi" style="top:252px"><span class="l">Export</span><span class="arr"></span></div>
<div class="mi" style="top:271px"><span class="l">Generate</span><span class="arr"></span></div>
<div class="mi" style="top:290px"><span class="l">Share...</span></div>
<div class="mi" style="top:309px"><span class="l">Share on Behance...</span></div>
<div class="sep" style="top:333px"></div>
<div class="mi" style="top:339px"><span class="l">Search Adobe Stock...</span></div>
<div class="mi" style="top:358px"><span class="l">Place Embedded...</span></div>
<div class="mi" style="top:377px"><span class="l">Place Linked...</span></div>
<div class="mi d" style="top:396px"><span class="l">Package...</span></div>
<div class="sep" style="top:420px"></div>
<div class="mi" style="top:426px"><span class="l">Automate</span><span class="arr"></span></div>
<div class="mi" style="top:445px"><span class="l">Scripts</span><span class="arr"></span></div>
<div class="mi" style="top:464px"><span class="l">Import</span><span class="arr"></span></div>
<div class="sep" style="top:488px"></div>
<div class="mi" style="top:494px"><span class="l">File Info...</span><span class="r">Alt+Shift+Ctrl+I</span></div>
<div class="sep" style="top:518px"></div>
<div class="mi" style="top:524px"><span class="l">Print...</span><span class="r">Ctrl+P</span></div>
<div class="mi" style="top:543px"><span class="l">Print One Copy</span><span class="r">Alt+Shift+Ctrl+P</span></div>
<div class="sep" style="top:567px"></div>
<div class="mi" style="top:573px"><span class="l">Exit</span><span class="r">Ctrl+Q</span></div>
<!-- end y 619 -->
</div>
</body></html>
